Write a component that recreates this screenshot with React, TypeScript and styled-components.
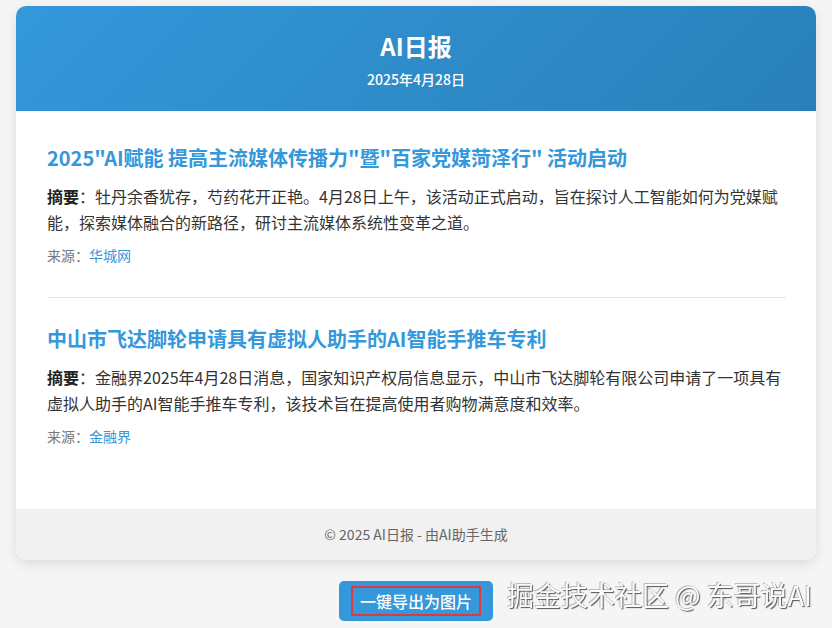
import React from "react";
import styled, { createGlobalStyle } from "styled-components";

const GlobalStyle = createGlobalStyle`
    * {
        box-sizing: border-box;
    }
    body {
        margin: 0;
        background: #f5f5f5;
        font-family: "Noto Sans CJK SC", "Noto Sans", sans-serif;
        color: #333;
    }
`;

const Page = styled.div`
    min-height: 100vh;
    padding: 6px 16px 7px;
    display: flex;
    flex-direction: column;
    align-items: center;
`;

const Report = styled.div`
    width: 800px;
    background: #ffffff;
    border-radius: 10px;
    overflow: hidden;
    box-shadow: 0 4px 12px rgba(0, 0, 0, 0.1);
`;

const Header = styled.header`
    background: linear-gradient(135deg, #3498db, #2980b9);
    color: #ffffff;
    text-align: center;
    padding: 24px 20px 21px;
    display: flex;
    flex-direction: column;
    gap: 6px;
`;

const HeaderTitle = styled.h1`
    margin: 0;
    font-size: 24px;
    line-height: 32px;
    font-weight: bold;
`;

const HeaderDate = styled.div`
    font-size: 14px;
    line-height: 22px;
    font-weight: 500;
`;

const Content = styled.main`
    padding: 33px 30px 30px 31px;
`;

const Article = styled.article`
    padding-bottom: 32px;
    border-bottom: 1px solid #e6e6e6;
    margin-bottom: 27px;

    &:last-child {
        border-bottom: none;
        margin-bottom: 0;
        padding-bottom: 33px;
    }
`;

const ArticleTitle = styled.h2`
    margin: 0 0 12px;
    font-size: 20px;
    line-height: 28px;
    font-weight: bold;
    color: #3498db;
`;

const Summary = styled.p`
    margin: 0 0 10px;
    font-size: 16px;
    line-height: 25.6px;
    color: #333;
`;

const SummaryLabel = styled.strong`
    font-weight: bold;
    color: #222;
`;

const Source = styled.div`
    font-size: 14px;
    line-height: 20px;
    color: #777;
`;

const SourceLink = styled.a`
    color: #3498db;
    text-decoration: none;
`;

const Footer = styled.footer`
    background: #f1f1f1;
    text-align: center;
    padding: 15px;
    font-size: 14px;
    line-height: 21px;
    color: #666;
`;

const ExportButton = styled.button`
    margin-top: 21px;
    height: 40px;
    padding: 0 12px;
    background: #3498db;
    border: none;
    border-radius: 5px;
    color: #ffffff;
    font-family: inherit;
    font-size: 16px;
    font-weight: 500;
    cursor: pointer;
    display: flex;
    align-items: center;
`;

const ButtonLabel = styled.span`
    border: 2px solid #e0393b;
    padding: 2px 7px;
    line-height: 22px;
`;

const Watermark = styled.div`
    position: fixed;
    right: 20px;
    bottom: 18px;
    font-size: 27px;
    line-height: 30px;
    color: #fbfbfb;
    text-shadow: 1px 1px 1px #555, -1px -1px 0 #bbb;
    pointer-events: none;
`;

const articles = [
    {
        title: "2025\"AI赋能 提高主流媒体传播力\"暨\"百家党媒菏泽行\" 活动启动",
        summary: "牡丹余香犹存，芍药花开正艳。4月28日上午，该活动正式启动，旨在探讨人工智能如何为党媒赋能，探索媒体融合的新路径，研讨主流媒体系统性变革之道。",
        source: "华城网",
    },
    {
        title: "中山市飞达脚轮申请具有虚拟人助手的AI智能手推车专利",
        summary: "金融界2025年4月28日消息，国家知识产权局信息显示，中山市飞达脚轮有限公司申请了一项具有虚拟人助手的AI智能手推车专利，该技术旨在提高使用者购物满意度和效率。",
        source: "金融界",
    },
];

const App = () => {
    return (
        <Page>
            <GlobalStyle />
            <Report>
                <Header>
                    <HeaderTitle>AI日报</HeaderTitle>
                    <HeaderDate>2025年4月28日</HeaderDate>
                </Header>
                <Content>
                    {articles.map((item) => (
                        <Article key={item.title}>
                            <ArticleTitle>{item.title}</ArticleTitle>
                            <Summary>
                                <SummaryLabel>摘要</SummaryLabel>：{item.summary}
                            </Summary>
                            <Source>
                                来源：<SourceLink href="#">{item.source}</SourceLink>
                            </Source>
                        </Article>
                    ))}
                </Content>
                <Footer>© 2025 AI日报 - 由AI助手生成</Footer>
            </Report>
            <ExportButton>
                <ButtonLabel>一键导出为图片</ButtonLabel>
            </ExportButton>
            <Watermark>掘金技术社区 @ 东哥说AI</Watermark>
        </Page>
    );
};

export default App;
